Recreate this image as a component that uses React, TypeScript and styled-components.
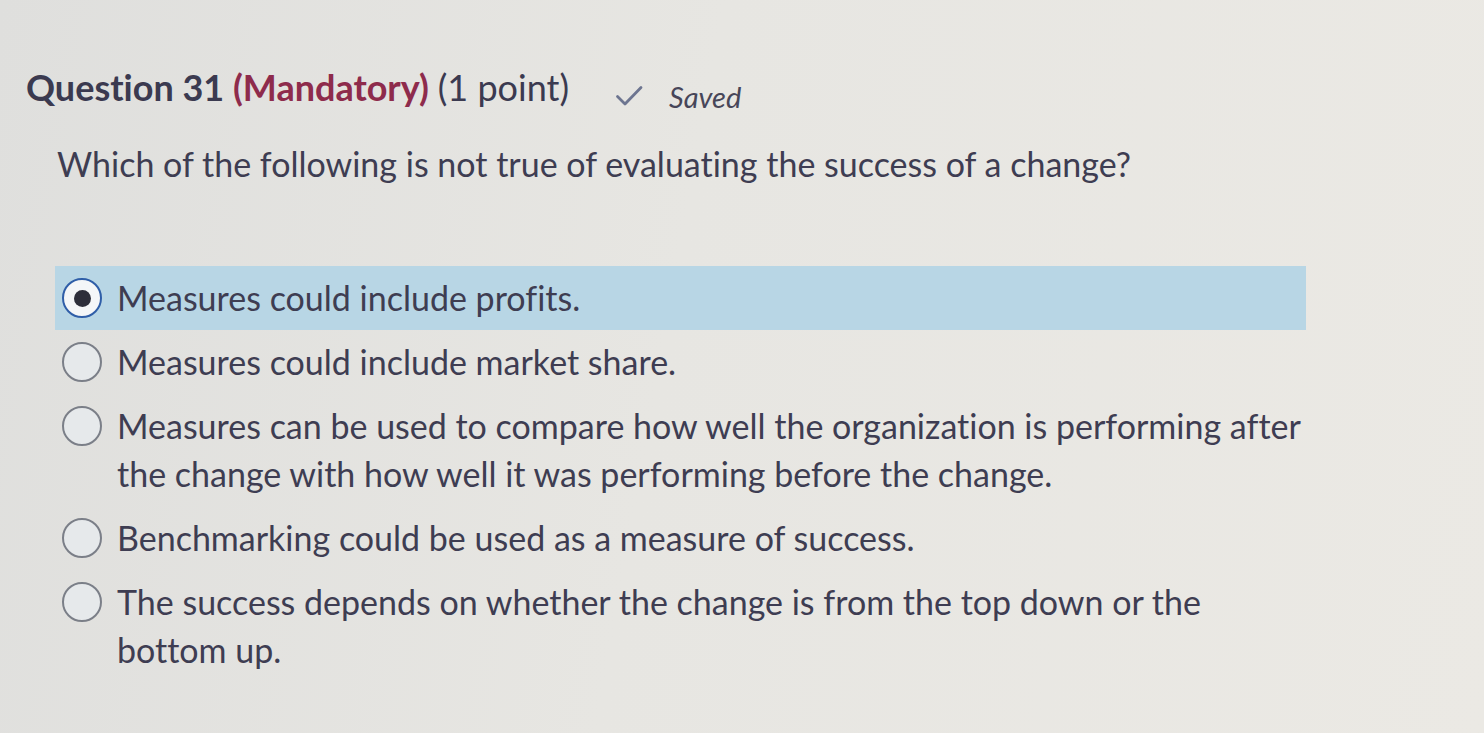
import React, { useState } from "react";
import styled, { createGlobalStyle } from "styled-components";

const GlobalStyle = createGlobalStyle`
  html, body {
    margin: 0;
    padding: 0;
  }
  body {
    background: linear-gradient(100deg, #dfdfdd 0%, #e7e6e2 45%, #ebe9e4 100%);
    font-family: Lato, "Noto Sans", sans-serif;
    font-variant-ligatures: none;
    color: #3e3d52;
    min-height: 733px;
  }
`;

const Page = styled.div`
  padding: 64px 0 0 0;
  width: 1484px;
  height: 733px;
  box-sizing: border-box;
  overflow: hidden;
`;

const Header = styled.div`
  display: flex;
  align-items: baseline;
  padding-left: 26px;
  height: 46px;
`;

const Title = styled.h2`
  margin: 0;
  font-size: 36px;
  font-weight: 700;
  line-height: 46px;
  color: #3b3a50;
`;

const Mandatory = styled.span`
  color: #8e2b4c;
`;

const Points = styled.span`
  font-weight: 400;
`;

const SavedTag = styled.span`
  display: flex;
  align-items: center;
  gap: 26px;
  margin-left: 46px;
  font-size: 29px;
  font-style: italic;
  color: #474659;
  position: relative;
  top: 6px;
`;

const Question = styled.p`
  margin: 30px 0 0 57px;
  font-size: 34px;
  line-height: 48px;
  color: #3e3d52;
`;

const OptionList = styled.div`
  margin: 78px 0 0 55px;
  width: 1251px;
  display: flex;
  flex-direction: column;
`;

const Option = styled.label<{ selected: boolean }>`
  display: flex;
  align-items: flex-start;
  gap: 15px;
  padding: 8px 0 8px 7px;
  background: ${({ selected }) => (selected ? "#b8d6e5" : "transparent")};
  cursor: pointer;
`;

const Radio = styled.span<{ selected: boolean }>`
  flex: none;
  width: 40px;
  height: 40px;
  margin-top: 4px;
  box-sizing: border-box;
  border-radius: 50%;
  border: ${({ selected }) => (selected ? "2.5px solid #2f5ea8" : "2px solid #7b7f88")};
  background: ${({ selected }) => (selected ? "#f4f6f8" : "#e6e9eb")};
  display: flex;
  align-items: center;
  justify-content: center;

  &::after {
    content: "";
    width: 17px;
    height: 17px;
    border-radius: 50%;
    background: #2d2e3a;
    display: ${({ selected }) => (selected ? "block" : "none")};
  }
`;

const OptionText = styled.span`
  font-size: 34px;
  line-height: 48px;
  max-width: 1185px;
  color: #3e3d52;
`;

const options = [
  "Measures could include profits.",
  "Measures could include market share.",
  "Measures can be used to compare how well the organization is performing after the change with how well it was performing before the change.",
  "Benchmarking could be used as a measure of success.",
  "The success depends on whether the change is from the top down or the bottom up.",
];

export default function App() {
  const [picked, setPicked] = useState<number>(0);

  return (
    <Page>
      <GlobalStyle />
      <Header>
        <Title>
          Question 31 <Mandatory>(Mandatory)</Mandatory> <Points>(1 point)</Points>
        </Title>
        <SavedTag>
          <svg width="28" height="22" viewBox="0 0 28 22" aria-hidden="true">
            <path d="M2.5 11.5l7.5 7.5L26 2.5" fill="none" stroke="#6d7590" strokeWidth="2.8" strokeLinecap="round" strokeLinejoin="round" />
          </svg>
          Saved
        </SavedTag>
      </Header>
      <Question>Which of the following is not true of evaluating the success of a change?</Question>
      <OptionList>
        {options.map((text, index) => (
          <Option key={index} selected={picked === index} onClick={() => setPicked(index)}>
            <Radio selected={picked === index} />
            <OptionText>{text}</OptionText>
          </Option>
        ))}
      </OptionList>
    </Page>
  );
}
